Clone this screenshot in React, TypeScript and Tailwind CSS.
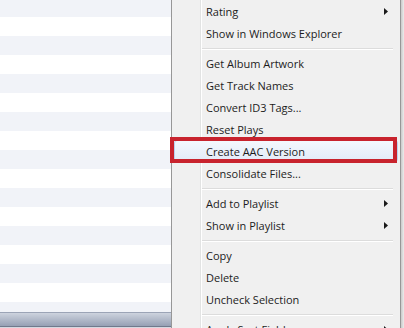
import React from "react";

// menu rows, "sep" marks a separator line
type Row = { label: string; sub?: boolean; hover?: boolean } | "sep";

const rows: Row[] = [
  { label: "Rating", sub: true },
  { label: "Show in Windows Explorer" },
  "sep",
  { label: "Get Album Artwork" },
  { label: "Get Track Names" },
  { label: "Convert ID3 Tags..." },
  { label: "Reset Plays" },
  { label: "Create AAC Version", hover: true },
  { label: "Consolidate Files..." },
  "sep",
  { label: "Add to Playlist", sub: true },
  { label: "Show in Playlist", sub: true },
  "sep",
  { label: "Copy" },
  { label: "Delete" },
  { label: "Uncheck Selection" },
  "sep",
  { label: "Apply Sort Field", sub: true },
];

function Arrow() {
  return (
    <svg width="4" height="7" viewBox="0 0 4 7" className="shrink-0">
      <path d="M0 0 L4 3.5 L0 7 Z" fill="#1a1a1a" />
    </svg>
  );
}

function TrackList() {
  const stripes = Array.from({ length: 18 }, (_, i) => i);
  return (
    <div className="flex w-[171px] shrink-0 flex-col">
      <div className="h-[312px] overflow-hidden">
        <div className="-mt-[2px] flex flex-col">
          {stripes.map((i) => (
            <div
              key={i}
              className={i % 2 === 0 ? "h-[19px] bg-[#f1f3f8]" : "h-[19px] bg-white"}
            />
          ))}
        </div>
      </div>
      <div className="h-[14px] border-t border-[#9ba4b6] bg-gradient-to-b from-[#cdd3de] to-[#96a0b4]" />
      <div className="h-[1px] bg-[#6f798c]" />
      <div className="h-[1px] bg-[#d4d8e0]" />
    </div>
  );
}

export default function App() {
  return (
    <div className="relative flex h-[328px] w-[404px] overflow-hidden bg-white font-['Open_Sans',sans-serif] text-[11px] text-[#1c1c1c]">
      <TrackList />

      {/* context menu */}
      <div className="flex w-[230px] shrink-0 flex-col overflow-hidden border-x border-[#979797] bg-[#f0f0f0] bg-[linear-gradient(to_right,#f0f0f0_28px,#e2e3e3_28px,#e2e3e3_29px,#ffffff_29px,#ffffff_30px,#f0f0f0_30px)]">
        {rows.map((row, i) =>
          row === "sep" ? (
            <div key={i} className="ml-[30px] mr-[7px] h-[8px] shrink-0 pt-[4px]">
              <div className="h-[1px] bg-[#dcdcdc]" />
              <div className="h-[1px] bg-white" />
            </div>
          ) : (
            <div
              key={i}
              className={
                row.hover
                  ? "mx-[2px] flex h-[22px] shrink-0 items-center justify-between rounded-[3px] border border-[#b8d2f0] bg-gradient-to-b from-[#f4f8fd] to-[#e2ebf8] pl-[31px] pr-[9px]"
                  : "flex h-[22px] shrink-0 items-center justify-between pl-[34px] pr-[12px]"
              }
            >
              <span className="whitespace-nowrap leading-none">{row.label}</span>
              {row.sub && <Arrow />}
            </div>
          )
        )}
      </div>

      {/* drop shadow right of the menu */}
      <div className="w-[3px] shrink-0 bg-gradient-to-r from-[#c9c9c9] to-[#ececec]" />

      {/* red annotation box */}
      <div className="absolute left-[170px] top-[137px] h-[26px] w-[227px] border-[4px] border-[#c8232d]" />
    </div>
  );
}
